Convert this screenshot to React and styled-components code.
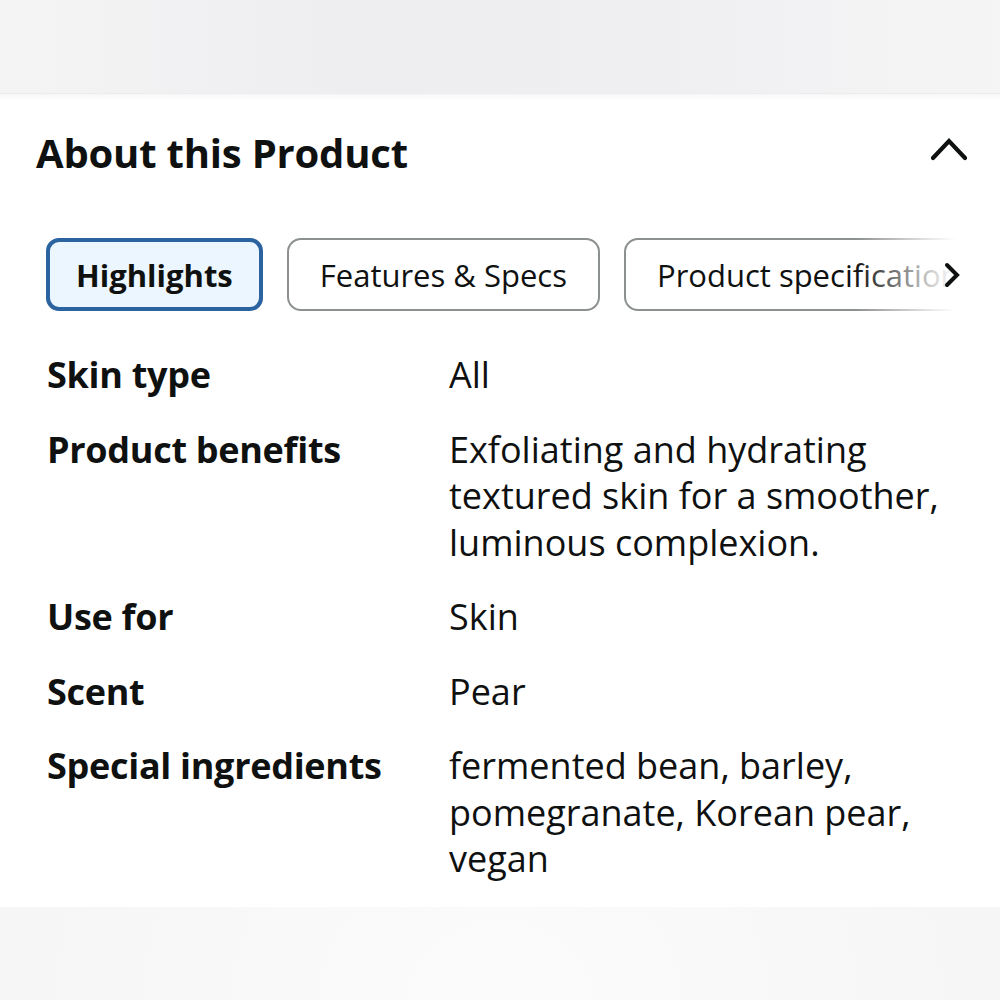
import React from "react";
import styled, { createGlobalStyle, css } from "styled-components";

const Global = createGlobalStyle`
  html, body { margin: 0; padding: 0; background: #f6f6f6; }
  body { font-family: "Open Sans", "Noto Sans", sans-serif; color: #0f1111; -webkit-font-smoothing: antialiased; }
  * { box-sizing: border-box; }
`;

const Page = styled.div`
  min-height: 1000px;
  display: flex;
  flex-direction: column;
  background: radial-gradient(ellipse 70% 60% at 50% 100%, #fbfbfb 0%, #f4f4f4 100%);
`;

const TopBand = styled.div`
  height: 94px;
  background: linear-gradient(90deg, #f4f4f5 0%, #eeeef0 35%, #efeff1 65%, #f5f5f6 100%);
  border-bottom: 1px solid #ececee;
`;

const Card = styled.section`
  background: #ffffff;
  padding: 31px 0 24px;
  box-shadow: inset 0 8px 10px -8px rgba(0, 0, 0, 0.07);
`;

const Header = styled.div`
  display: flex;
  align-items: center;
  justify-content: space-between;
  padding: 0 33px 0 36px;
  height: 56px;
`;

const Title = styled.h2`
  margin: 0;
  font-size: 40px;
  line-height: 56px;
  font-weight: 700;
  letter-spacing: -0.2px;
`;

const ToggleIcon = styled.svg`
  width: 36px;
  height: 24px;
  margin-top: -8px;
  flex: none;
`;

const TabsWrap = styled.div`
  position: relative;
  margin: 57px 35px 0 46px;
  overflow: hidden;
`;

const TabList = styled.div`
  display: flex;
  gap: 24px;
`;

const Tab = styled.button`
  flex: none;
  height: 73px;
  padding: 0 31px;
  border: 2px solid #8d9090;
  border-radius: 14px;
  background: #ffffff;
  font-family: inherit;
  font-size: 31px;
  font-weight: 400;
  color: #0f1111;
  white-space: nowrap;
  ${(p) =>
    p.$active &&
    css`
      border: 4px solid #2a63a0;
      border-radius: 13px;
      background: #ecf6fe;
      padding: 0 26px;
      font-weight: 700;
    `}
`;

const Fade = styled.div`
  position: absolute;
  top: 0;
  right: 0;
  bottom: 0;
  width: 110px;
  display: flex;
  align-items: center;
  justify-content: flex-end;
  padding-right: 5px;
  background: linear-gradient(90deg, rgba(255, 255, 255, 0) 0%, rgba(255, 255, 255, 0.8) 70%, #ffffff 92%);
`;

const Arrow = styled.svg`
  width: 16px;
  height: 26px;
`;

const List = styled.dl`
  margin: 41px 35px 0 47px;
  display: flex;
  flex-direction: column;
  gap: 28px;
`;

const Row = styled.div`
  display: grid;
  grid-template-columns: 402px 1fr;
  font-size: 36px;
  line-height: 46.5px;
`;

const Label = styled.dt`
  margin: 0;
  font-weight: 700;
  letter-spacing: -0.3px;
`;

const Value = styled.dd`
  margin: 0;
  font-weight: 400;
`;

const rows = [
  ["Skin type", "All"],
  ["Product benefits", "Exfoliating and hydrating textured skin for a smoother, luminous complexion."],
  ["Use for", "Skin"],
  ["Scent", "Pear"],
  ["Special ingredients", "fermented bean, barley, pomegranate, Korean pear, vegan"],
];

const tabs = ["Highlights", "Features & Specs", "Product specifications"];

export default function App() {
  return (
    <>
      <Global />
      <Page>
        <TopBand />
        <Card>
          <Header>
            <Title>About this Product</Title>
            <ToggleIcon viewBox="0 0 36 24" aria-hidden="true">
              <polyline points="2,21 18,4 34,21" fill="none" stroke="#0f1111" strokeWidth="4.2" strokeLinecap="round" strokeLinejoin="miter" />
            </ToggleIcon>
          </Header>
          <TabsWrap>
            <TabList>
              {tabs.map((t, i) => (
                <Tab key={t} $active={i === 0}>
                  {t}
                </Tab>
              ))}
            </TabList>
            <Fade>
              <Arrow viewBox="0 0 16 26" aria-hidden="true">
                <polyline points="3,3 13,13 3,23" fill="none" stroke="#0f1111" strokeWidth="4" strokeLinecap="round" />
              </Arrow>
            </Fade>
          </TabsWrap>
          <List>
            {rows.map(([k, v]) => (
              <Row key={k}>
                <Label>{k}</Label>
                <Value>{v}</Value>
              </Row>
            ))}
          </List>
        </Card>
      </Page>
    </>
  );
}
